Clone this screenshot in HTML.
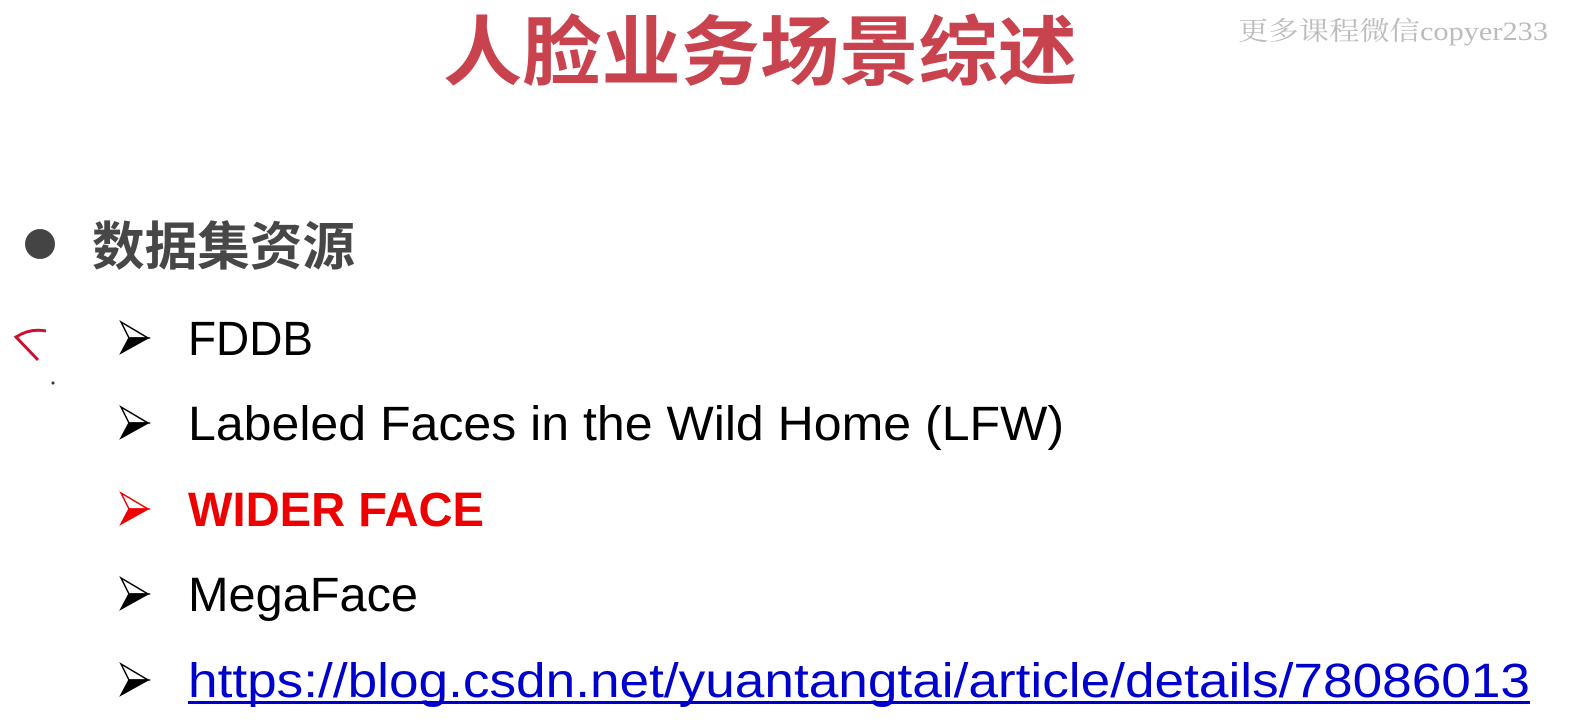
<!DOCTYPE html>
<html><head><meta charset="utf-8"><style>
html,body{margin:0;padding:0;background:#fff;width:1573px;height:726px;overflow:hidden}
svg{display:block}
</style></head><body>
<svg width="1573" height="726" viewBox="0 0 1573 726" xmlns="http://www.w3.org/2000/svg">
<rect width="1573" height="726" fill="#fff"/>
<text x="443" y="79" textLength="634" lengthAdjust="spacingAndGlyphs" font-family="'Liberation Sans','Noto Sans CJK SC',sans-serif" font-weight="bold" font-size="76" fill="#c9434f">人脸业务场景综述</text>
<text x="1238" y="40" textLength="310" lengthAdjust="spacingAndGlyphs" font-family="'Liberation Serif','Noto Serif CJK SC',serif" font-size="26" fill="#bcbcbc">更多课程微信copyer233</text>
<circle cx="40" cy="244" r="15" fill="#444"/>
<text x="92" y="265" textLength="263" lengthAdjust="spacingAndGlyphs" font-family="'Liberation Sans','Noto Sans CJK SC',sans-serif" font-weight="bold" font-size="52" fill="#474747">数据集资源</text>
<path d="M46 331 Q30 328 16 337 L38 360" stroke="#c8102e" stroke-width="3" fill="none"/>
<circle cx="53" cy="383" r="1.5" fill="#333"/>
<g font-family="'Liberation Sans',sans-serif" font-size="48">
<g id="a1">
<path d="M121 322 L148 338 L129 338 Z" fill="#fff" stroke="#000" stroke-width="1.5"/>
<path d="M121 353 L148 338 L129 338 Z" fill="#000" stroke="#000" stroke-width="1.5"/>
</g>
<use href="#a1" y="85"/>
<use href="#a1" y="256"/>
<use href="#a1" y="342"/>
<path d="M121 493 L148 509 L129 509 Z" fill="#fff" stroke="#e00" stroke-width="1.5"/>
<path d="M121 524 L148 509 L129 509 Z" fill="#e00" stroke="#e00" stroke-width="1.5"/>
<text x="188" y="355" textLength="125" lengthAdjust="spacingAndGlyphs" fill="#000">FDDB</text>
<text x="188" y="440" textLength="876" lengthAdjust="spacingAndGlyphs" fill="#000">Labeled Faces in the Wild Home (LFW)</text>
<text x="188" y="526" textLength="296" lengthAdjust="spacingAndGlyphs" fill="#e00" font-weight="bold">WIDER FACE</text>
<text x="188" y="611" textLength="230" lengthAdjust="spacingAndGlyphs" fill="#000">MegaFace</text>
<text x="188" y="697" textLength="1342" lengthAdjust="spacingAndGlyphs" fill="#0000cc">https://blog.csdn.net/yuantangtai/article/details/78086013</text>
<rect x="188" y="701" width="1342" height="3" fill="#0000cc"/>
</g>
</svg>
</body></html>
